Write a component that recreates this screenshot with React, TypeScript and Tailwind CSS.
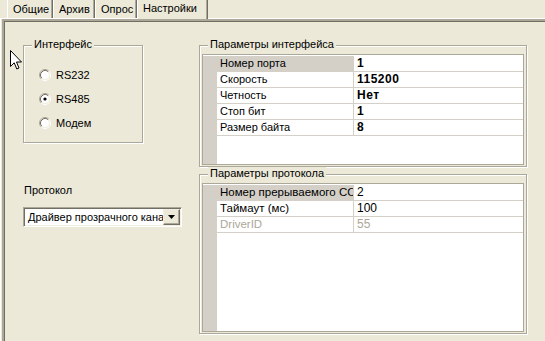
import React from "react";

type Row = { label: string; value: string; selected?: boolean; disabled?: boolean };

const ifaceRows: Row[] = [
  { label: "Номер порта", value: "1", selected: true },
  { label: "Скорость", value: "115200" },
  { label: "Четность", value: "Нет" },
  { label: "Стоп бит", value: "1" },
  { label: "Размер байта", value: "8" },
];

const protoRows: Row[] = [
  { label: "Номер прерываемого COM", value: "2", selected: true },
  { label: "Таймаут (мс)", value: "100" },
  { label: "DriverID", value: "55", disabled: true },
];

function Radio({ checked }: { checked?: boolean }) {
  return (
    <svg width="12" height="12" viewBox="0 0 12 12">
      <circle cx="6" cy="6" r="4.5" fill="#fff" />
      <path d="M2.11 9.89 A5.5 5.5 0 0 1 9.89 2.11" fill="none" stroke="#ACA899" />
      <path d="M9.89 2.11 A5.5 5.5 0 0 1 2.11 9.89" fill="none" stroke="#fff" />
      <path d="M2.82 9.18 A4.5 4.5 0 0 1 9.18 2.82" fill="none" stroke="#716F64" />
      <path d="M9.18 2.82 A4.5 4.5 0 0 1 2.82 9.18" fill="none" stroke="#F1EFE2" />
      {checked && <circle cx="6" cy="6" r="1.6" fill="#000" />}
    </svg>
  );
}

function GroupBox({
  title,
  className,
  children,
}: {
  title: string;
  className?: string;
  children?: React.ReactNode;
}) {
  return (
    <div
      className={`relative border border-[#ACA899] shadow-[inset_1px_1px_0_#fff,1px_1px_0_#fff] ${className ?? ""}`}
    >
      <span className="absolute left-[8px] top-[-8px] bg-[#ECE9D8] px-[2px] text-[11px] leading-[13px]">
        {title}
      </span>
      {children}
    </div>
  );
}

function PropGrid({ rows, big }: { rows: Row[]; big?: boolean }) {
  return (
    <div className="flex h-full border border-[#ACA899] bg-white">
      <div className="mt-[1px] w-[14px] bg-[#D4D0C8]" />
      <div className={`flex flex-1 flex-col pt-[1px] ${big ? "text-[11.5px]" : "text-[11px]"}`}>
        {rows.map((r) => (
          <div
            key={r.label}
            className={`flex h-[16px] border-b border-[#D4D0C8] leading-[15px] ${r.disabled ? "text-[#ACA899]" : "text-black"}`}
          >
            <div
              className={`w-[137px] overflow-hidden whitespace-nowrap border-r border-[#D4D0C8] pl-[3px] ${r.selected ? "bg-[#D4D0C8]" : ""}`}
            >
              {r.label}
            </div>
            <div
              className={`flex-1 whitespace-nowrap pl-[3px] ${big ? "text-[12px]" : "text-[12px] font-bold tracking-[0.5px]"}`}
            >
              {r.value}
            </div>
          </div>
        ))}
      </div>
    </div>
  );
}

const tabs = ["Общие", "Архив", "Опрос", "Настройки"];

export default function App() {
  return (
    <div className="relative flex h-[341px] w-[545px] flex-col overflow-hidden bg-[#ECE9D8] font-['Liberation_Sans',Arial,sans-serif] text-[11px] text-black">
      {/* tab strip */}
      <div className="flex h-[18px] pl-[7px]">
        {tabs.map((t, i) => {
          const active = i === tabs.length - 1;
          const w = ["w-[46px]", "w-[42px]", "w-[42px]", "w-[71px]"][i];
          return (
            <div
              key={t}
              className={`${w} flex border-l border-r border-l-white border-r-[#716F64] pl-[5px] leading-[13px] shadow-[inset_-1px_0_0_#ACA899] ${
                active ? "relative z-10 h-[19px] items-center bg-[#ECE9D8] pb-[3px]" : "h-[18px] items-center"
              }`}
            >
              {t}
            </div>
          );
        })}
      </div>

      {/* tab page */}
      <div className="flex flex-1 border-l border-t border-white pl-[1px]">
        <div className="flex flex-1 border-l-2 border-t-2 border-[#ACA899] pt-[24px] shadow-[inset_1px_1px_0_#716F64]">
          {/* left column */}
          <div className="w-[195px] pl-[19px]">
            <GroupBox title="Интерфейс" className="h-[98px] w-[120px]">
              <div className="flex flex-col pl-[15px] pt-[17px]">
                {[
                  { t: "RS232", c: false },
                  { t: "RS485", c: true },
                  { t: "Модем", c: false },
                ].map((r) => (
                  <div key={r.t} className="flex h-[24px] items-center gap-[5px] leading-[13px]">
                    <Radio checked={r.c} />
                    <span>{r.t}</span>
                  </div>
                ))}
              </div>
            </GroupBox>

            <div className="ml-[1px] mt-[41px] leading-[13px]">Протокол</div>

            <div className="mt-[10px] flex h-[20px] w-[159px] border border-b-white border-l-[#ACA899] border-r-white border-t-[#ACA899] bg-white shadow-[inset_1px_1px_0_#716F64,inset_-1px_-1px_0_#F1EFE2]">
              <div className="flex-1 overflow-hidden whitespace-nowrap pl-[4px] pt-[1px] leading-[16px]">
                Драйвер прозрачного канала
              </div>
              <div className="mr-[1px] mt-[1px] flex h-[16px] w-[17px] items-center justify-center border border-b-[#716F64] border-l-[#F1EFE2] border-r-[#716F64] border-t-[#F1EFE2] bg-[#ECE9D8] shadow-[inset_-1px_-1px_0_#ACA899]">
                <svg width="7" height="4" viewBox="0 0 7 4">
                  <polygon points="0,0 7,0 3.5,4" fill="#000" />
                </svg>
              </div>
            </div>
          </div>

          {/* right column */}
          <div className="w-[328px]">
            <GroupBox title="Параметры интерфейса" className="h-[122px] px-[2px] pb-[1px] pt-[8px]">
              <PropGrid rows={ifaceRows} />
            </GroupBox>
            <GroupBox title="Параметры протокола" className="mt-[7px] h-[160px] px-[2px] pb-[1px] pt-[8px]">
              <PropGrid rows={protoRows} big />
            </GroupBox>
          </div>
        </div>
      </div>

      {/* mouse pointer */}
      <svg className="absolute left-[10px] top-[50px]" width="13" height="21" viewBox="0 0 13 21">
        <path
          d="M0.5 0.5 L0.5 16.5 L4.2 12.8 L6.8 19 L9 18 L6.5 12 L11.5 12 Z"
          fill="#fff"
          stroke="#000"
          strokeLinejoin="miter"
        />
      </svg>
    </div>
  );
}
